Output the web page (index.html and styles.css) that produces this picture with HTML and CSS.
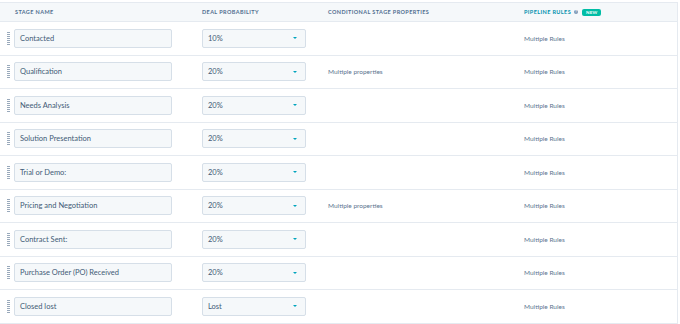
FILE: index.html
```html
<!DOCTYPE html>
<html lang="en">
<head>
    <meta charset="UTF-8">
    <title>Deal Stages</title>
    <link rel="stylesheet" href="styles.css">
</head>
<body>
    <div class="stages">
        <!-- Header -->
        <div class="row head">
            <div class="cell first-head">Stage name</div>
            <div class="cell">Deal probability</div>
            <div class="cell">Conditional stage properties</div>
            <div class="cell rules-head">Pipeline rules <span class="info">?</span> <span class="badge">New</span></div>
        </div>

        <div class="row">
            <div class="cell name"><span class="grip"></span><div class="field">Contacted</div></div>
            <div class="cell"><div class="field select">10%<span class="caret"></span></div></div>
            <div class="cell muted"></div>
            <div class="cell muted">Multiple Rules</div>
        </div>
        <div class="row">
            <div class="cell name"><span class="grip"></span><div class="field">Qualification</div></div>
            <div class="cell"><div class="field select">20%<span class="caret"></span></div></div>
            <div class="cell muted">Multiple properties</div>
            <div class="cell muted">Multiple Rules</div>
        </div>
        <div class="row">
            <div class="cell name"><span class="grip"></span><div class="field">Needs Analysis</div></div>
            <div class="cell"><div class="field select">20%<span class="caret"></span></div></div>
            <div class="cell muted"></div>
            <div class="cell muted">Multiple Rules</div>
        </div>
        <div class="row">
            <div class="cell name"><span class="grip"></span><div class="field">Solution Presentation</div></div>
            <div class="cell"><div class="field select">20%<span class="caret"></span></div></div>
            <div class="cell muted"></div>
            <div class="cell muted">Multiple Rules</div>
        </div>
        <div class="row">
            <div class="cell name"><span class="grip"></span><div class="field">Trial or Demo:</div></div>
            <div class="cell"><div class="field select">20%<span class="caret"></span></div></div>
            <div class="cell muted"></div>
            <div class="cell muted">Multiple Rules</div>
        </div>
        <div class="row">
            <div class="cell name"><span class="grip"></span><div class="field">Pricing and Negotiation</div></div>
            <div class="cell"><div class="field select">20%<span class="caret"></span></div></div>
            <div class="cell muted">Multiple properties</div>
            <div class="cell muted">Multiple Rules</div>
        </div>
        <div class="row">
            <div class="cell name"><span class="grip"></span><div class="field">Contract Sent:</div></div>
            <div class="cell"><div class="field select">20%<span class="caret"></span></div></div>
            <div class="cell muted"></div>
            <div class="cell muted">Multiple Rules</div>
        </div>
        <div class="row">
            <div class="cell name"><span class="grip"></span><div class="field">Purchase Order (PO) Received</div></div>
            <div class="cell"><div class="field select">20%<span class="caret"></span></div></div>
            <div class="cell muted"></div>
            <div class="cell muted">Multiple Rules</div>
        </div>
        <div class="row">
            <div class="cell name"><span class="grip"></span><div class="field">Closed lost</div></div>
            <div class="cell"><div class="field select">Lost<span class="caret"></span></div></div>
            <div class="cell muted"></div>
            <div class="cell muted">Multiple Rules</div>
        </div>
    </div>
</body>
</html>
```

FILE: styles.css
```css
body {
    margin: 0;
    padding-top: 2px;
    background: #ffffff;
    font-family: Lato, "Open Sans", sans-serif;
    color: #33475b;
}
.stages {
    width: 677px;
    border-top: 1px solid #e5eaf0;
    border-right: 1px solid #e5eaf0;
}
.row {
    display: grid;
    grid-template-columns: 202px 126px 196px 1fr;
    height: 33.5px;
    border-bottom: 1px solid #e5eaf0;
    box-sizing: border-box;
}
.row.head {
    height: 19px;
    background: #f5f8fa;
}
.cell {
    display: flex;
    align-items: center;
    font-size: 7px;
}
.head .cell {
    font-size: 5.5px;
    font-weight: bold;
    text-transform: uppercase;
    letter-spacing: 0.4px;
    color: #516f90;
}
.head .first-head {
    padding-left: 15px;
}
.head .rules-head {
    color: #0091ae;
}
.info {
    display: inline-flex;
    align-items: center;
    justify-content: center;
    width: 4px;
    height: 4px;
    margin: 0 4px 0 3px;
    border-radius: 50%;
    background: #7c98b6;
    color: #ffffff;
    font-size: 3px;
}
.badge {
    display: inline-block;
    padding: 1px 4px;
    border-radius: 2px;
    background: #00bda5;
    color: #ffffff;
    font-size: 4.5px;
    letter-spacing: 0.2px;
}
.name {
    padding-left: 7px;
    gap: 4px;
}
.grip {
    width: 3px;
    height: 13px;
    background: repeating-linear-gradient(#99a9bb 0 1px, #ffffff 1px 2px);
}
.field {
    box-sizing: border-box;
    height: 19px;
    display: flex;
    align-items: center;
    padding: 0 5px;
    background: #f5f8fa;
    border: 1px solid #d6dfe8;
    border-radius: 2px;
    font-size: 7.5px;
    color: #425b76;
}
.name .field {
    width: 158px;
}
.select {
    width: 104px;
    justify-content: space-between;
}
.caret {
    width: 0;
    height: 0;
    margin-right: 3px;
    border-left: 2.5px solid transparent;
    border-right: 2.5px solid transparent;
    border-top: 2.5px solid #00a4bd;
}
.muted {
    font-size: 6.5px;
    color: #5c7590;
}
```
